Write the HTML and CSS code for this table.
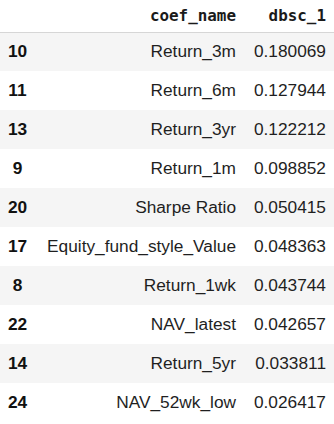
FILE: index.html
```html
<!DOCTYPE html>
<html lang="en">
<head>
    <meta charset="UTF-8">
    <meta name="viewport" content="width=device-width, initial-scale=1.0">
    <title>coefficients</title>
    <link rel="stylesheet" href="styles.css">
</head>
<body>
    <!-- dataframe -->
    <table class="dataframe">
        <thead>
            <tr>
                <th class="idx"></th>
                <th class="name">coef_name</th>
                <th class="val">dbsc_1</th>
            </tr>
        </thead>
        <tbody>
            <tr><th class="idx">10</th><td class="name">Return_3m</td><td class="val">0.180069</td></tr>
            <tr><th class="idx">11</th><td class="name">Return_6m</td><td class="val">0.127944</td></tr>
            <tr><th class="idx">13</th><td class="name">Return_3yr</td><td class="val">0.122212</td></tr>
            <tr><th class="idx">9</th><td class="name">Return_1m</td><td class="val">0.098852</td></tr>
            <tr><th class="idx">20</th><td class="name">Sharpe Ratio</td><td class="val">0.050415</td></tr>
            <tr><th class="idx">17</th><td class="name">Equity_fund_style_Value</td><td class="val">0.048363</td></tr>
            <tr><th class="idx">8</th><td class="name">Return_1wk</td><td class="val">0.043744</td></tr>
            <tr><th class="idx">22</th><td class="name">NAV_latest</td><td class="val">0.042657</td></tr>
            <tr><th class="idx">14</th><td class="name">Return_5yr</td><td class="val">0.033811</td></tr>
            <tr><th class="idx">24</th><td class="name">NAV_52wk_low</td><td class="val">0.026417</td></tr>
        </tbody>
    </table>
</body>
</html>
```
FILE: styles.css
```css
/* page styles */

body {
    margin: 0;
    padding: 0;
    background-color: #ffffff;
    font-family: 'Liberation Sans', Arial, sans-serif;
    font-size: 17.3px;
    color: #1f1f1f;
}
table.dataframe {
    border-collapse: collapse;
    table-layout: fixed;
    width: 334px;
}
thead tr {
    height: 32px;
    border-bottom: 1px solid #d6d6d6;
}
thead th {
    font-family: 'DejaVu Sans Mono', 'Liberation Mono', monospace;
    font-size: 15.9px;
    font-weight: bold;
    color: #1a1a1a;
    padding: 0;
    vertical-align: middle;
}
tbody tr {
    height: 39px;
}
tbody tr:nth-child(odd) {
    background-color: #f5f5f5;
}
th, td {
    padding: 0;
    white-space: nowrap;
}
.idx {
    width: 35px;
    text-align: center;
    font-weight: bold;
    color: #111111;
}
.name {
    width: 201px;
    text-align: right;
    padding-right: 9px;
}
.val {
    text-align: right;
    padding-right: 8px;
}
```
